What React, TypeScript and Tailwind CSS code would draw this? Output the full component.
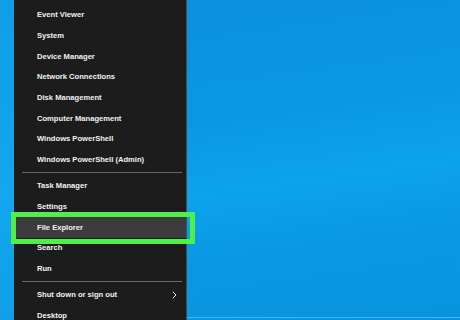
import React from "react";

type Item = { label: string; highlight?: boolean; arrow?: boolean } | { sep: true };

const items: Item[] = [
  { label: "Event Viewer" },
  { label: "System" },
  { label: "Device Manager" },
  { label: "Network Connections" },
  { label: "Disk Management" },
  { label: "Computer Management" },
  { label: "Windows PowerShell" },
  { label: "Windows PowerShell (Admin)" },
  { sep: true },
  { label: "Task Manager" },
  { label: "Settings" },
  { label: "File Explorer", highlight: true },
  { label: "Search" },
  { label: "Run" },
  { sep: true },
  { label: "Shut down or sign out", arrow: true },
  { label: "Desktop" },
];

export default function App() {
  return (
    <div
      className="relative w-[460px] h-[320px] overflow-hidden flex bg-[linear-gradient(172deg,#0a8fdc_0%,#0b98e3_40%,#0ca3eb_58%,#0a98e2_75%,#0993df_100%)]"
      style={{ fontFamily: '"Liberation Sans", Arial, sans-serif' }}
    >
      <div className="w-[14px] h-full shrink-0 bg-[linear-gradient(180deg,#0f9fe6_0%,#12a7ee_60%,#0fa0e8_100%)]" />
      <div className="w-[173px] h-full shrink-0 overflow-hidden bg-[#1c1c1c] border-r border-[#4a4a4a] flex flex-col pt-[4.6px]">
        {items.map((it, i) =>
          "sep" in it ? (
            <div key={i} className="h-[5.4px] shrink-0 flex items-center pl-[8px] pr-[4px]">
              <div className="h-px w-full bg-[#6a6a6a]" />
            </div>
          ) : (
            <div
              key={i}
              className={
                "h-[20.7px] shrink-0 flex items-center pl-[23px] pr-[6px] text-[7.6px] font-bold text-[#f2f2f2] " +
                (it.highlight ? "bg-[#3c3c3c]" : "")
              }
            >
              <span className="flex-1 whitespace-nowrap">{it.label}</span>
              {it.arrow && (
                <svg width="5" height="8" viewBox="0 0 5 8" className="mr-[3px]">
                  <path d="M0.8 0.8 L4 4 L0.8 7.2" stroke="#e8e8e8" strokeWidth="1" fill="none" />
                </svg>
              )}
            </div>
          )
        )}
      </div>
      <div className="flex-1 h-full" />
      <div className="absolute left-[187px] right-0 bottom-[2px] h-px bg-[#3fb6f0]" />
      <div className="absolute left-[11px] top-[212px] w-[184px] h-[32px] border-[5px] border-[#4ff04a]" />
    </div>
  );
}
